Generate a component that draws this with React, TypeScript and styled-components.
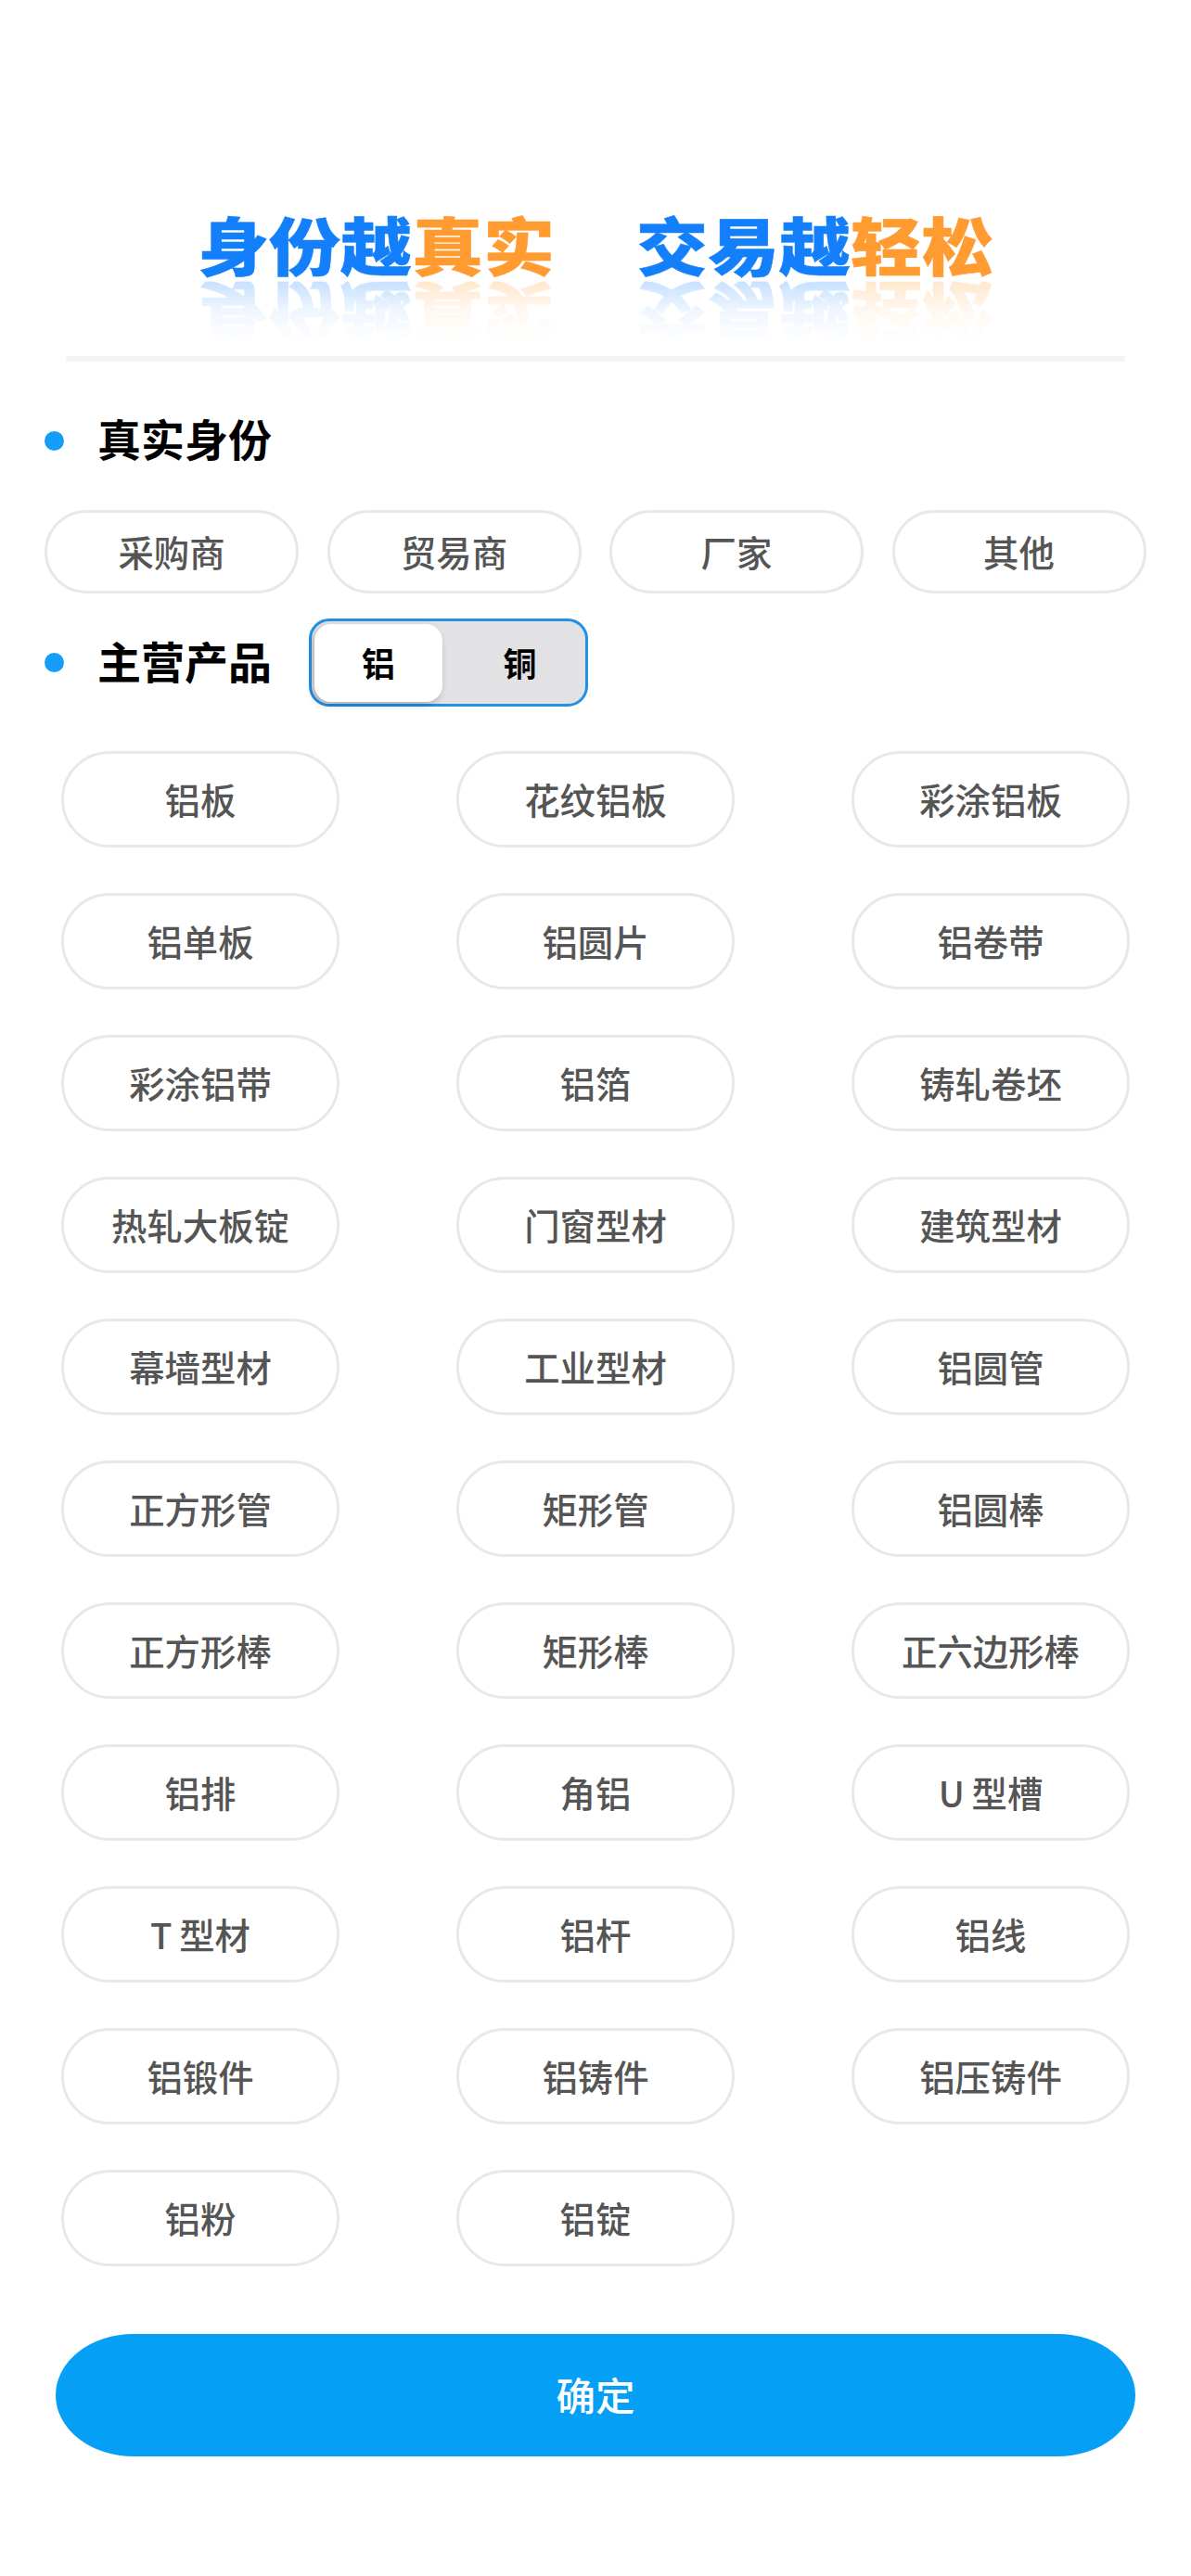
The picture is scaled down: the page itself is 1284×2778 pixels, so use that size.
import React from 'react';
import styled, { createGlobalStyle } from 'styled-components';

const Global = createGlobalStyle`
  html, body { margin: 0; padding: 0; background: #fff; }
  body { font-family: "Noto Sans CJK SC", "Noto Sans", sans-serif; }
  * { box-sizing: border-box; }
`;

const Page = styled.div`
  width: 1284px;
  height: 2778px;
  display: flex;
  flex-direction: column;
  background: #fff;
  overflow: hidden;
`;

const Banner = styled.div`
  height: 384px;
  padding-top: 224px;
  display: flex;
  justify-content: center;
  gap: 88px;
`;

const Slogan = styled.div`
  display: flex;
  height: 78px;
  font-size: 77px;
  line-height: 78px;
  font-weight: 900;
  transform: scaleY(0.88);
  -webkit-box-reflect: below 7px linear-gradient(transparent 8%, rgba(255, 255, 255, 0.07) 55%, rgba(255, 255, 255, 0.24));
`;

const SloganPart = styled.span<{ $tone: 'blue' | 'orange' }>`
  color: ${(p) => (p.$tone === 'blue' ? '#137ffb' : '#ff9b30')};
  -webkit-text-stroke: 0.5px ${(p) => (p.$tone === 'blue' ? '#137ffb' : '#ff9b30')};
`;

const Divider = styled.div`
  height: 6px;
  margin: 0 71px;
  background: #f4f4f8;
`;

const Section = styled.section`
  padding: 0 48px;
`;

const Heading = styled.div<{ $first?: boolean }>`
  display: flex;
  align-items: center;
  height: ${(p) => (p.$first ? '160px' : '95px')};
  padding-top: ${(p) => (p.$first ? '10px' : '0')};
  margin-top: ${(p) => (p.$first ? '0' : '27px')};
`;

const Dot = styled.i`
  width: 21px;
  height: 21px;
  border-radius: 50%;
  background: #149ef7;
  margin-right: 36px;
  flex: none;
`;

const Label = styled.h2`
  margin: -6px 0 0;
  font-size: 47px;
  line-height: 60px;
  font-weight: 700;
  color: #000;
`;

const RoleRow = styled.div`
  display: grid;
  grid-template-columns: repeat(4, 274px);
  column-gap: 30.5px;
  height: 90px;
`;

const Pill = styled.div`
  display: flex;
  align-items: center;
  justify-content: center;
  height: 100%;
  padding-bottom: 2px;
  border: 3px solid #e8e8e8;
  border-radius: 60px;
  font-size: 38.4px;
  font-weight: 500;
  color: #555;
  background: #fff;
`;

const Toggle = styled.div`
  display: flex;
  width: 301px;
  height: 95px;
  margin-left: 40px;
  padding: 3px;
  border: 3px solid #2191e8;
  border-radius: 22px;
  background: #e2e2e4;
`;

const Segment = styled.div<{ $on?: boolean }>`
  display: flex;
  align-items: center;
  justify-content: center;
  height: 84px;
  width: ${(p) => (p.$on ? '139px' : '152px')};
  padding-left: ${(p) => (p.$on ? '0' : '16px')};
  padding-bottom: 2px;
  border-radius: 18px;
  font-size: 36px;
  font-weight: 700;
  color: #000;
  background: ${(p) => (p.$on ? '#fff' : 'transparent')};
  box-shadow: ${(p) => (p.$on ? '-2px 3px 7px rgba(0, 0, 0, 0.24)' : 'none')};
`;

const ProductGrid = styled.div`
  display: grid;
  grid-template-columns: repeat(3, 300px);
  grid-auto-rows: 104px;
  justify-content: space-between;
  row-gap: 49px;
  margin: 48px 66px 0 66px;
`;

const Confirm = styled.button`
  display: flex;
  align-items: center;
  justify-content: center;
  width: 1164px;
  height: 132px;
  margin: 73px 0 0 60px;
  padding: 0 0 3px;
  border: none;
  border-radius: 84px / 66px;
  background: #069ff6;
  color: #fff;
  font-family: inherit;
  font-size: 42.5px;
  font-weight: 500;
`;

const roles = ['采购商', '贸易商', '厂家', '其他'];
const products = [
  '铝板', '花纹铝板', '彩涂铝板',
  '铝单板', '铝圆片', '铝卷带',
  '彩涂铝带', '铝箔', '铸轧卷坯',
  '热轧大板锭', '门窗型材', '建筑型材',
  '幕墙型材', '工业型材', '铝圆管',
  '正方形管', '矩形管', '铝圆棒',
  '正方形棒', '矩形棒', '正六边形棒',
  '铝排', '角铝', 'U\u2009型槽',
  'T\u2009型材', '铝杆', '铝线',
  '铝锻件', '铝铸件', '铝压铸件',
  '铝粉', '铝锭',
];

export default function App() {
  return (
    <Page>
      <Global />
      <Banner>
        <Slogan>
          <SloganPart $tone="blue">身份越</SloganPart>
          <SloganPart $tone="orange">真实</SloganPart>
        </Slogan>
        <Slogan>
          <SloganPart $tone="blue">交易越</SloganPart>
          <SloganPart $tone="orange">轻松</SloganPart>
        </Slogan>
      </Banner>
      <Divider />
      <Section>
        <Heading $first>
          <Dot />
          <Label>真实身份</Label>
        </Heading>
        <RoleRow>
          {roles.map((r) => (
            <Pill key={r}>{r}</Pill>
          ))}
        </RoleRow>
        <Heading>
          <Dot />
          <Label>主营产品</Label>
          <Toggle>
            <Segment $on>铝</Segment>
            <Segment>铜</Segment>
          </Toggle>
        </Heading>
      </Section>
      <ProductGrid>
        {products.map((p) => (
          <Pill key={p}>{p}</Pill>
        ))}
      </ProductGrid>
      <Confirm>确定</Confirm>
    </Page>
  );
}
